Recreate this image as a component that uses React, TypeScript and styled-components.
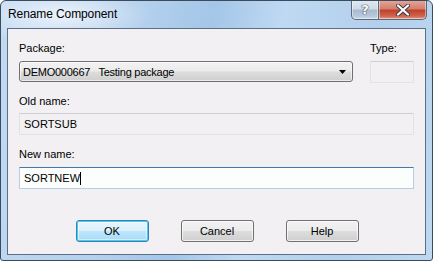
import React from "react";
import styled, { createGlobalStyle } from "styled-components";

const GlobalStyle = createGlobalStyle`
    html, body {
        margin: 0;
        padding: 0;
        background: #ffffff;
    }
    body {
        font-family: "Liberation Sans", Arial, sans-serif;
        font-size: 11px;
        color: #000000;
    }
`;

const Window = styled.div`
    box-sizing: border-box;
    width: 433px;
    height: 261px;
    border: 1px solid #3b4b5e;
    border-radius: 6px 6px 3px 3px;
    padding: 0 6px 5px 6px;
    display: flex;
    flex-direction: column;
    background:
        radial-gradient(ellipse 90px 30px at 60px 14px, rgba(255, 255, 255, 0.7), rgba(255, 255, 255, 0) 100%),
        linear-gradient(100deg, #c2daf2 0%, #b4d0ed 30%, #a4c6e8 45%, #bfd9f2 60%, #b2cfec 80%, #bed8f1 100%);
    overflow: hidden;
`;

const TitleBar = styled.div`
    height: 27px;
    display: flex;
    align-items: flex-start;
    justify-content: space-between;
`;

const Title = styled.div`
    font-family: "Liberation Sans", Arial, sans-serif;
    font-size: 12px;
    line-height: 14px;
    padding: 6px 0 0 1px;
    letter-spacing: -0.1px;
    color: #000000;
`;

const CaptionButtons = styled.div`
    display: flex;
    margin-top: -1px;
    margin-right: -1px;
`;

const CaptionButton = styled.div<{ $close?: boolean }>`
    box-sizing: border-box;
    height: 20px;
    width: ${({ $close }) => ($close ? "48px" : "28px")};
    border: 1px solid #5a6878;
    border-top: none;
    border-left: ${({ $close }) => ($close ? "none" : "1px solid #5a6878")};
    border-radius: ${({ $close }) => ($close ? "0 0 5px 0" : "0 0 0 5px")};
    display: flex;
    align-items: center;
    justify-content: center;
    background: ${({ $close }) =>
        $close
            ? "linear-gradient(to bottom, #e3a99b 0%, #d3806f 45%, #c1412a 55%, #cf6450 85%, #e79c8a 100%)"
            : "linear-gradient(to bottom, #e2e9f1 0%, #cfdbe8 45%, #a9bccf 55%, #b6c8da 85%, #d0dde9 100%)"};
    box-shadow: inset 0 0 0 1px rgba(255, 255, 255, 0.45);
`;

const HelpGlyph = styled.span`
    font-family: "DejaVu Sans", sans-serif;
    font-size: 13px;
    font-weight: bold;
    line-height: 14px;
    color: #ffffff;
    text-shadow: 0 0 1px #39475a, 0 0 1px #39475a, 0 0 1px #39475a;
`;

const Client = styled.div`
    box-sizing: border-box;
    flex: 1;
    border: 1px solid #5d6f85;
    background: #f2f0f3;
    padding: 12px 10px 0 11px;
    display: flex;
    flex-direction: column;
`;

const TopRow = styled.div`
    display: grid;
    grid-template-columns: 334px 44px;
    column-gap: 17px;
`;

const Field = styled.div`
    display: flex;
    flex-direction: column;
`;

const Label = styled.div<{ $gap?: number }>`
    line-height: 14px;
    height: 14px;
    margin-bottom: ${({ $gap }) => $gap ?? 6}px;
    white-space: nowrap;
`;

const Combo = styled.div`
    box-sizing: border-box;
    height: 21px;
    border: 1px solid #707070;
    border-radius: 3px;
    background: linear-gradient(to bottom, #f2f2f2 0%, #ebebeb 48%, #dddddd 52%, #cfcfcf 100%);
    box-shadow: inset 0 0 0 1px rgba(255, 255, 255, 0.6);
    display: flex;
    align-items: center;
    justify-content: space-between;
    padding: 0 6px 0 3px;
`;

const ComboText = styled.span`
    line-height: 14px;
    white-space: pre;
    letter-spacing: -0.25px;
`;

const Box = styled.div<{ $focus?: boolean }>`
    box-sizing: border-box;
    height: 22px;
    border: 1px solid ${({ $focus }) => ($focus ? "#b5cfe7" : "#e2e2e4")};
    border-top-color: ${({ $focus }) => ($focus ? "#3d7bad" : "#cfcfd1")};
    background: ${({ $focus }) => ($focus ? "#fbfefc" : "#f2f0f3")};
    border-radius: 1px;
    display: flex;
    align-items: center;
    padding: 0 4px;
    line-height: 14px;
`;

const Caret = styled.span`
    display: inline-block;
    width: 1px;
    height: 13px;
    background: #000000;
    vertical-align: middle;
`;

const Section = styled.div<{ $top: number }>`
    margin-top: ${({ $top }) => $top}px;
    width: 395px;
`;

const ButtonRow = styled.div`
    display: flex;
    justify-content: center;
    gap: 32px;
    margin-top: 31px;
`;

const Button = styled.button<{ $default?: boolean }>`
    box-sizing: border-box;
    width: 73px;
    height: 22px;
    font-family: "Liberation Sans", Arial, sans-serif;
    font-size: 11px;
    color: #000000;
    padding: 0;
    border-radius: 3px;
    border: 1px solid ${({ $default }) => ($default ? "#3c7fb1" : "#707070")};
    background: ${({ $default }) =>
        $default
            ? "linear-gradient(to bottom, #eaf6fd 0%, #d9f0fc 48%, #bee6fd 52%, #a7d9f5 100%)"
            : "linear-gradient(to bottom, #f2f2f2 0%, #ebebeb 48%, #dddddd 52%, #cfcfcf 100%)"};
    box-shadow: ${({ $default }) =>
        $default
            ? "inset 0 0 0 1px #48cbf2, inset 0 0 0 2px rgba(255,255,255,0.5)"
            : "inset 0 0 0 1px rgba(255, 255, 255, 0.7)"};
`;

const App = () => {
    return (
        <>
            <GlobalStyle />
            <Window>
                <TitleBar>
                    <Title>Rename Component</Title>
                    <CaptionButtons>
                        <CaptionButton>
                            <HelpGlyph>?</HelpGlyph>
                        </CaptionButton>
                        <CaptionButton $close>
                            <svg width="14" height="12" viewBox="0 0 14 12">
                                <path
                                    d="M2 1.5 L12 10.5 M12 1.5 L2 10.5"
                                    stroke="#3b3b48"
                                    strokeWidth="4"
                                    strokeLinecap="round"
                                />
                                <path
                                    d="M2 1.5 L12 10.5 M12 1.5 L2 10.5"
                                    stroke="#ffffff"
                                    strokeWidth="2.2"
                                    strokeLinecap="round"
                                />
                            </svg>
                        </CaptionButton>
                    </CaptionButtons>
                </TitleBar>
                <Client>
                    <TopRow>
                        <Field>
                            <Label>Package:</Label>
                            <Combo>
                                <ComboText>DEMO000667   Testing package</ComboText>
                                <svg width="7" height="4" viewBox="0 0 7 4">
                                    <path d="M0 0 H7 L3.5 4 Z" fill="#000000" />
                                </svg>
                            </Combo>
                        </Field>
                        <Field>
                            <Label>Type:</Label>
                            <Box />
                        </Field>
                    </TopRow>
                    <Section $top={11}>
                        <Label $gap={5}>Old name:</Label>
                        <Box>SORTSUB</Box>
                    </Section>
                    <Section $top={12}>
                        <Label>New name:</Label>
                        <Box $focus>
                            SORTNEW
                            <Caret />
                        </Box>
                    </Section>
                    <ButtonRow>
                        <Button $default>OK</Button>
                        <Button>Cancel</Button>
                        <Button>Help</Button>
                    </ButtonRow>
                </Client>
            </Window>
        </>
    );
};

export default App;
